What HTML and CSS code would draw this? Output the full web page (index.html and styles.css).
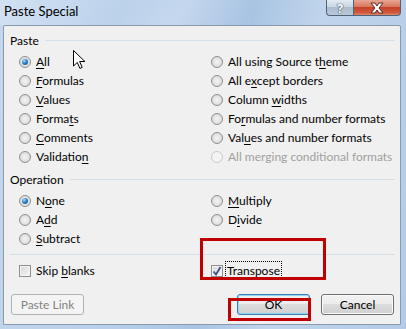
FILE: index.html
```html
<!DOCTYPE html>
<html lang="en">
<head>
  <meta charset="UTF-8" />
  <title>Paste Special</title>
  <link rel="stylesheet" href="styles.css">
</head>
<body>
  <div class="window">
    <div class="titlebar">
      <span class="title">Paste Special</span>
      <div class="caption-buttons">
        <span class="cap-btn help">?</span>
        <span class="cap-btn close">
          <svg width="16" height="12" viewBox="0 0 16 12">
            <path d="M2 1h4l2 3 2-3h4l-4 5 4 5h-4l-2-3-2 3H2l4-5z" fill="#fff" stroke="#5a2a22" stroke-width="1" stroke-linejoin="round"/>
          </svg>
        </span>
      </div>
    </div>

    <div class="client">
      <div class="group-title"><span>Paste</span></div>
      <div class="options">
        <div class="opt"><span class="radio checked"></span><span><u>A</u>ll</span></div>
        <div class="opt"><span class="radio"></span><span>All using Source t<u>h</u>eme</span></div>
        <div class="opt"><span class="radio"></span><span><u>F</u>ormulas</span></div>
        <div class="opt"><span class="radio"></span><span>All e<u>x</u>cept borders</span></div>
        <div class="opt"><span class="radio"></span><span><u>V</u>alues</span></div>
        <div class="opt"><span class="radio"></span><span>Column <u>w</u>idths</span></div>
        <div class="opt"><span class="radio"></span><span>Forma<u>t</u>s</span></div>
        <div class="opt"><span class="radio"></span><span>Fo<u>r</u>mulas and number formats</span></div>
        <div class="opt"><span class="radio"></span><span><u>C</u>omments</span></div>
        <div class="opt"><span class="radio"></span><span>Val<u>u</u>es and number formats</span></div>
        <div class="opt"><span class="radio"></span><span>Validatio<u>n</u></span></div>
        <div class="opt disabled"><span class="radio"></span><span>All merging conditional formats</span></div>
      </div>

      <div class="group-title operation"><span>Operation</span></div>
      <div class="options">
        <div class="opt"><span class="radio checked"></span><span>N<u>o</u>ne</span></div>
        <div class="opt"><span class="radio"></span><span><u>M</u>ultiply</span></div>
        <div class="opt"><span class="radio"></span><span>A<u>d</u>d</span></div>
        <div class="opt"><span class="radio"></span><span>D<u>i</u>vide</span></div>
        <div class="opt"><span class="radio"></span><span><u>S</u>ubtract</span></div>
      </div>

      <div class="separator"></div>

      <div class="options checks">
        <div class="opt"><span class="checkbox"></span><span>Skip <u>b</u>lanks</span></div>
        <div class="opt"><span class="checkbox checked">
          <svg width="10" height="10" viewBox="0 0 10 10"><path d="M1.5 5.5l2.5 3 4.5-7.5" fill="none" stroke="#3b4f8c" stroke-width="1.8"/></svg>
        </span><span class="focus">Transpos<u>e</u></span></div>
      </div>

      <div class="buttons">
        <button class="btn" disabled>Paste Link</button>
        <span class="spacer"></span>
        <button class="btn default">OK</button>
        <button class="btn">Cancel</button>
      </div>
    </div>
  </div>

  <svg class="cursor" width="13" height="20" viewBox="0 0 13 20">
    <path d="M0.5 0.5v15.5l3.8-3.6 2.6 6 2.3-1-2.6-5.9h5.3z" fill="#fff" stroke="#000" stroke-width="1"/>
  </svg>
  <div class="mark mark-transpose"></div>
  <div class="mark mark-ok"></div>
</body>
</html>
```

FILE: styles.css
```css
* {
  box-sizing: border-box;
}

body {
  margin: 0;
  width: 406px;
  height: 329px;
  overflow: hidden;
  position: relative;
  font-family: Lato, "Noto Sans", sans-serif;
  font-size: 12px;
  color: #000;
  background: linear-gradient(100deg, #c3d7ee 0%, #b9d0ea 35%, #a9c4e3 55%, #c0d5ec 70%, #b3cbe7 100%);
}

.window {
  display: flex;
  flex-direction: column;
  height: 329px;
}

.titlebar {
  height: 25px;
  display: flex;
  align-items: flex-start;
  padding-left: 4px;
  background: linear-gradient(120deg, rgba(255,255,255,0.25) 0%, rgba(255,255,255,0) 30%, rgba(255,255,255,0.2) 45%, rgba(255,255,255,0) 60%);
}

.title {
  font-size: 13px;
  line-height: 22px;
  color: #000;
}

.caption-buttons {
  margin-left: auto;
  margin-right: 5px;
  display: flex;
  height: 16px;
}

.cap-btn {
  height: 16px;
  display: flex;
  align-items: center;
  justify-content: center;
  border: 1px solid #4f6278;
  border-top: none;
}

.help {
  width: 27px;
  border-radius: 0 0 0 4px;
  border-right: none;
  background: linear-gradient(#e3eaf2 0%, #cbd6e2 45%, #aebdce 50%, #b9c8d8 100%);
  color: #fff;
  font-family: "Noto Sans", sans-serif;
  font-weight: bold;
  font-size: 13px;
  text-shadow: 0 0 1px #3c4a5a, 0 0 1px #3c4a5a, 0 0 1px #3c4a5a;
}

.close {
  width: 48px;
  border-radius: 0 0 4px 0;
  background: linear-gradient(#e7a593 0%, #d9775f 45%, #c4412a 50%, #d0583d 85%, #e08a6c 100%);
}

.client {
  height: 300px;
  margin: 0 5px 0 3px;
  border: 1px solid #8a9aac;
  border-radius: 2px 2px 0 0;
  background: #f0f0f0;
  padding: 6px 5px 0 6px;
}

.group-title {
  display: flex;
  align-items: center;
  height: 16px;
  gap: 6px;
}

.group-title::after {
  content: "";
  flex: 1;
  height: 1px;
  background: #d5dfe5;
}

.group-title.operation {
  margin-top: 5px;
}

.options {
  display: grid;
  grid-template-columns: 192px 1fr;
  grid-auto-rows: 19px;
  padding-left: 9px;
  margin-top: 4px;
}

.opt {
  display: flex;
  align-items: center;
  gap: 5px;
  white-space: nowrap;
}

.opt u {
  text-decoration-thickness: 1px;
  text-underline-offset: 2px;
}

.radio {
  position: relative;
  flex: none;
  width: 12px;
  height: 12px;
  border-radius: 50%;
  border: 1px solid #8e8f8f;
  background: radial-gradient(circle at 50% 50%, #f4f4f4 0%, #e2e2e2 55%, #cfcfcf 100%);
}

.radio.checked::after {
  content: "";
  position: absolute;
  left: 2px;
  top: 2px;
  width: 6px;
  height: 6px;
  border-radius: 50%;
  background: radial-gradient(circle at 35% 30%, #a8e0ff 0%, #2b84c9 45%, #0d4c8a 100%);
}

.disabled {
  color: #a0a0a0;
}

.disabled .radio {
  border-color: #cacaca;
  background: #f4f4f4;
}

.separator {
  height: 1px;
  background: #d5dfe5;
  margin-top: 6px;
}

.checks {
  margin-top: 6px;
}

.checkbox {
  flex: none;
  width: 12px;
  height: 12px;
  border: 1px solid #8f8f8f;
  background: linear-gradient(135deg, #d8d8d8 0%, #f6f6f6 100%);
  box-shadow: inset 0 0 0 1px #f4f4f4;
  display: flex;
  align-items: center;
  justify-content: center;
}

.focus {
  outline: 1px dotted #000;
  padding: 1px;
  margin-left: -2px;
}

.buttons {
  display: flex;
  margin-top: 14px;
  padding: 0 1px;
}

.spacer {
  flex: 1;
}

.btn {
  width: 73px;
  height: 21px;
  margin-left: 11px;
  border: 1px solid #707070;
  border-radius: 3px;
  background: linear-gradient(#f2f2f2 0%, #ebebeb 50%, #dddddd 50%, #cfcfcf 100%);
  box-shadow: inset 0 0 0 1px #fbfbfb;
  font-family: inherit;
  font-size: 12px;
  color: #000;
  padding: 0;
}

.btn:first-child {
  margin-left: 0;
}

.btn:disabled {
  border-color: #adb2b5;
  background: #f4f4f4;
  box-shadow: none;
  color: #838383;
}

.btn.default {
  border-color: #3c7fb1;
  box-shadow: inset 0 0 0 1px #8fd5f7;
}

.cursor {
  position: absolute;
  left: 73px;
  top: 50px;
}

.mark {
  position: absolute;
  border: 3px solid #c00000;
}

.mark-transpose {
  left: 200px;
  top: 238px;
  width: 126px;
  height: 42px;
}

.mark-ok {
  left: 228px;
  top: 298px;
  width: 83px;
  height: 23px;
}
```
